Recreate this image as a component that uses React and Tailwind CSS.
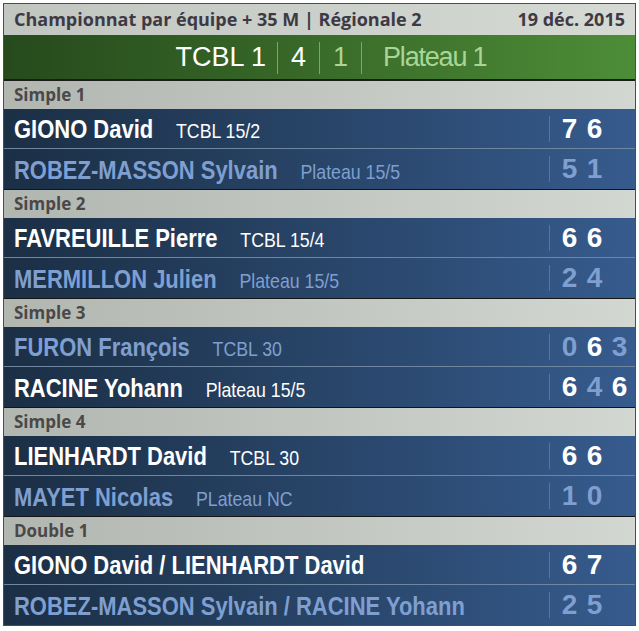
import React from "react";

const W = "text-white";
const L = "text-[#7f9fd0]";

const sections = [
  {
    title: "Simple 1",
    rows: [
      { name: "GIONO David", club: "TCBL 15/2", win: true, scores: [["7", 1], ["6", 1]] },
      { name: "ROBEZ-MASSON Sylvain", club: "Plateau 15/5", win: false, scores: [["5", 0], ["1", 0]] },
    ],
  },
  {
    title: "Simple 2",
    rows: [
      { name: "FAVREUILLE Pierre", club: "TCBL 15/4", win: true, scores: [["6", 1], ["6", 1]] },
      { name: "MERMILLON Julien", club: "Plateau 15/5", win: false, scores: [["2", 0], ["4", 0]] },
    ],
  },
  {
    title: "Simple 3",
    rows: [
      { name: "FURON François", club: "TCBL 30", win: false, scores: [["0", 0], ["6", 1], ["3", 0]] },
      { name: "RACINE Yohann", club: "Plateau 15/5", win: true, scores: [["6", 1], ["4", 0], ["6", 1]] },
    ],
  },
  {
    title: "Simple 4",
    rows: [
      { name: "LIENHARDT David", club: "TCBL 30", win: true, scores: [["6", 1], ["6", 1]] },
      { name: "MAYET Nicolas", club: "PLateau NC", win: false, scores: [["1", 0], ["0", 0]] },
    ],
  },
  {
    title: "Double 1",
    rows: [
      { name: "GIONO David / LIENHARDT David", club: "", win: true, scores: [["6", 1], ["7", 1]] },
      { name: "ROBEZ-MASSON Sylvain / RACINE Yohann", club: "", win: false, scores: [["2", 0], ["5", 0]] },
    ],
  },
];

const sans = { fontFamily: '"Liberation Sans", Arial, sans-serif' };
const ui = { fontFamily: '"Open Sans", "Noto Sans", sans-serif' };

function Row({ r, last }) {
  return (
    <div
      className={`flex items-center h-[40px] pl-[10px] bg-gradient-to-r from-[#1b2f45] to-[#365b8d] ${
        last ? "" : "border-b border-[#6f86a1]"
      }`}
    >
      <div className="flex-1 min-w-0 overflow-visible">
        <div
          className="flex items-baseline whitespace-nowrap origin-left scale-x-[0.845] pt-[1px]"
          style={sans}
        >
          <span className={`font-bold text-[26px] leading-none ${r.win ? W : L}`}>{r.name}</span>
          {r.club && (
            <span className={`ml-[27px] text-[21px] leading-none ${r.win ? W : L}`}>{r.club}</span>
          )}
        </div>
      </div>
      <div className="w-[86px] h-[26px] flex items-center border-l border-[#5b7594] pl-[7px]" style={sans}>
        {r.scores.map(([s, w], i) => (
          <span
            key={i}
            className={`w-[25px] text-center font-bold text-[28px] leading-none ${w ? W : L}`}
          >
            {s}
          </span>
        ))}
      </div>
    </div>
  );
}

export default function App() {
  return (
    <div className="bg-white w-[639px] h-[631px] pt-[3px] pl-[3px]">
      <div className="w-[633px] border border-[#3b5650]">
        <div
          className="h-[31px] flex items-center justify-between px-[10px] bg-gradient-to-r from-[#c2c6c1] to-[#d6dad5] text-[#3d3a44] font-bold text-[18px]"
          style={ui}
        >
          <span>Championnat par équipe + 35 M | Régionale 2</span>
          <span>19 déc. 2015</span>
        </div>
        <div
          className="h-[46px] grid grid-cols-[1fr_auto_1fr] items-center bg-gradient-to-r from-[#264a1c] to-[#4d8d37] border-b-2 border-[#1c1c1c] text-[27px] leading-none pt-[1px]"
          style={sans}
        >
          <div className="text-right pr-[11px] text-white">TCBL 1</div>
          <div className="flex items-center">
            <div className="h-[32px] border-l border-[#7aa86a]" />
            <div className="px-[13px] text-white">4</div>
            <div className="h-[32px] border-l border-[#7aa86a]" />
            <div className="px-[13px] text-[#a9d696]">1</div>
            <div className="h-[32px] border-l border-[#7aa86a]" />
          </div>
          <div className="pl-[21px] text-[#a9d696] tracking-[-1.2px]">Plateau 1</div>
        </div>
        {sections.map((sec, si) => (
          <div key={si} className={si < sections.length - 1 ? "border-b border-[#141414]" : ""}>
            <div
              className="h-[28px] flex items-center px-[10px] bg-gradient-to-r from-[#b2b6b0] to-[#d3d7d2] text-[#4a4848] font-bold text-[17px]"
              style={ui}
            >
              {sec.title}
            </div>
            {sec.rows.map((r, ri) => (
              <Row key={ri} r={r} last={ri === sec.rows.length - 1} />
            ))}
          </div>
        ))}
      </div>
    </div>
  );
}
